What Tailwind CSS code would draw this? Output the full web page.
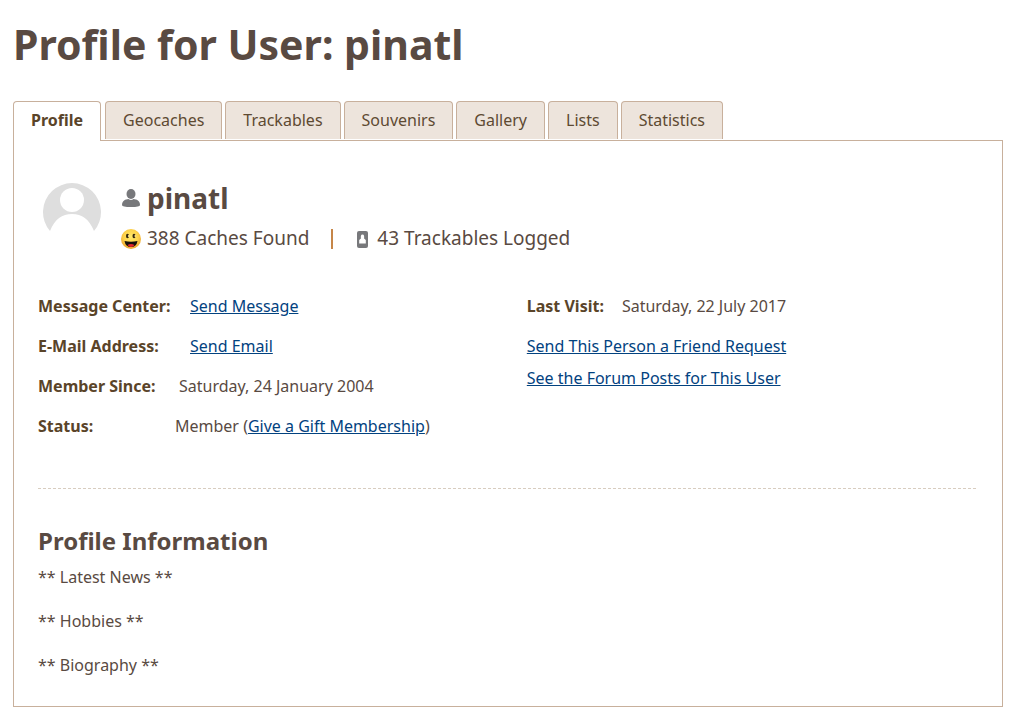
<!DOCTYPE html>
<html lang="en">
  <head>
    <meta charset="UTF-8" />
    <meta name="viewport" content="width=device-width, initial-scale=1.0" />
    <title>Profile for User: pinatl</title>
    <script src="https://cdn.jsdelivr.net/npm/@tailwindcss/browser@4"></script>
  </head>
  <body class="bg-white px-[13px] pt-[14px] pb-4 font-['Noto_Sans','Open_Sans',sans-serif] text-base text-[#594a42]">
    <h1 class="text-[41px] leading-[60px] font-bold">Profile for User: pinatl</h1>

    <nav class="mt-[27px] flex gap-[3px]" aria-label="Profile sections">
      <a href="#profile" aria-current="page" class="relative -mb-px h-10 rounded-t border border-b-0 border-[#c8b09c] bg-white px-[17px] pt-[6px] font-bold text-[#5a4429]">Profile</a>
      <a href="#geocaches" class="mb-px ml-px h-[38px] rounded-t border border-b-0 border-[#c8b09c] bg-[#ede4dc] px-[17px] pt-[6px] text-[#5e4a32]">Geocaches</a>
      <a href="#trackables" class="mb-px h-[38px] rounded-t border border-b-0 border-[#c8b09c] bg-[#ede4dc] px-[17px] pt-[6px] text-[#5e4a32]">Trackables</a>
      <a href="#souvenirs" class="mb-px h-[38px] rounded-t border border-b-0 border-[#c8b09c] bg-[#ede4dc] px-[17px] pt-[6px] text-[#5e4a32]">Souvenirs</a>
      <a href="#gallery" class="mb-px h-[38px] rounded-t border border-b-0 border-[#c8b09c] bg-[#ede4dc] px-[17px] pt-[6px] text-[#5e4a32]">Gallery</a>
      <a href="#lists" class="mb-px h-[38px] rounded-t border border-b-0 border-[#c8b09c] bg-[#ede4dc] px-[17px] pt-[6px] text-[#5e4a32]">Lists</a>
      <a href="#statistics" class="mb-px h-[38px] rounded-t border border-b-0 border-[#c8b09c] bg-[#ede4dc] px-[17px] pt-[6px] text-[#5e4a32]">Statistics</a>
    </nav>

    <main id="profile" class="border border-[#c8b09c] px-6 pt-[37px] pb-[29px]">
      <section class="flex">
        <svg class="mt-1 ml-1 h-[60px] w-[60px] shrink-0" viewBox="0 0 60 60" aria-hidden="true">
          <path fill="#dedede" d="M8 49A29 29 0 1 1 52 49C47 37 40 32 30 32S13 37 8 49Z" />
          <circle cx="30" cy="18" r="12" fill="#fff" />
        </svg>
        <div class="ml-[19px]">
          <h2 class="flex items-center gap-[6px] text-[28px] leading-10 font-bold">
            <svg class="h-5 w-5" viewBox="0 0 20 20" fill="#77787b" aria-hidden="true">
              <ellipse cx="10" cy="6" rx="4.500" ry="5" />
              <path d="M1 17C1 12.500 4.500 11.300 7.500 11C9 12.300 11 12.300 12.500 11C15.500 11.300 19 12.500 19 17Q19 19 10 19T1 17Z" />
            </svg>
            pinatl
          </h2>
          <div class="flex h-[41px] items-center text-[19px]">
            <svg class="mr-[6px] h-5 w-5" viewBox="0 0 20 20" aria-hidden="true">
              <defs>
                <radialGradient id="face" cx="50%" cy="40%" r="60%">
                  <stop offset="0" stop-color="#ffe96b" />
                  <stop offset="0.6" stop-color="#fdd24a" />
                  <stop offset="1" stop-color="#eda32f" />
                </radialGradient>
              </defs>
              <circle cx="10" cy="10" r="10" fill="url(#face)" />
              <ellipse cx="6.500" cy="7" rx="1.500" ry="2.300" fill="#33260f" />
              <ellipse cx="13" cy="7" rx="1.500" ry="2.300" fill="#33260f" />
              <circle cx="7.800" cy="7" r="0.900" fill="#ffe58a" />
              <circle cx="14.300" cy="7" r="0.900" fill="#ffe58a" />
              <path d="M3.500 12Q10 13.500 16.500 12Q15.500 18 10 18T3.500 12Z" fill="#16100b" />
              <path d="M6.500 16Q10 14 13.500 16Q12.500 18 10 18T6.500 16Z" fill="#e5242b" />
            </svg>
            <span>388 Caches Found</span>
            <span class="mr-6 ml-[22px] h-5 w-[2px] bg-[#c68648]"></span>
            <svg class="mr-[9px] h-5 w-[11px]" viewBox="0 0 11 20" aria-hidden="true">
              <rect y="2" width="11" height="17" rx="2" fill="#77787b" />
              <path fill="#fff" d="M5.500 5.500C7.300 5.500 7.300 7.500 7.100 9.500L8.800 11V14.500H2.200V11L3.900 9.500C3.700 7.500 3.700 5.500 5.500 5.500Z" />
            </svg>
            <span>43 Trackables Logged</span>
          </div>
        </div>
      </section>

      <section class="mt-[27px] grid grid-cols-[13fr_12fr] pb-[42px]">
        <dl>
          <div class="flex h-10 items-center">
            <dt class="w-[152px] font-bold text-[#5a4429]">Message Center:</dt>
            <dd><a href="#message" class="text-[#02427f] underline">Send Message</a></dd>
          </div>
          <div class="flex h-10 items-center">
            <dt class="w-[152px] font-bold text-[#5a4429]">E-Mail Address:</dt>
            <dd><a href="#email" class="text-[#02427f] underline">Send Email</a></dd>
          </div>
          <div class="flex h-10 items-center">
            <dt class="w-[141px] font-bold text-[#5a4429]">Member Since:</dt>
            <dd>Saturday, 24 January 2004</dd>
          </div>
          <div class="flex h-10 items-center">
            <dt class="w-[137px] font-bold text-[#5a4429]">Status:</dt>
            <dd>Member (<a href="#gift" class="text-[#02427f] underline">Give a Gift Membership</a>)</dd>
          </div>
        </dl>
        <div>
          <dl class="flex h-10 items-center gap-[18px]">
            <dt class="font-bold text-[#5a4429]">Last Visit:</dt>
            <dd>Saturday, 22 July 2017</dd>
          </dl>
          <ul class="pt-1 leading-8">
            <li><a href="#friend" class="text-[#02427f] underline">Send This Person a Friend Request</a></li>
            <li><a href="#forum" class="text-[#02427f] underline">See the Forum Posts for This User</a></li>
          </ul>
        </div>
      </section>

      <section class="mr-[2px] border-t border-dashed border-[#d8cdc0] pt-9">
        <h2 class="text-2xl font-bold">Profile Information</h2>
        <div class="mt-2 space-y-5">
          <p>** Latest News **</p>
          <p>** Hobbies **</p>
          <p>** Biography **</p>
        </div>
      </section>
    </main>
  </body>
</html>
